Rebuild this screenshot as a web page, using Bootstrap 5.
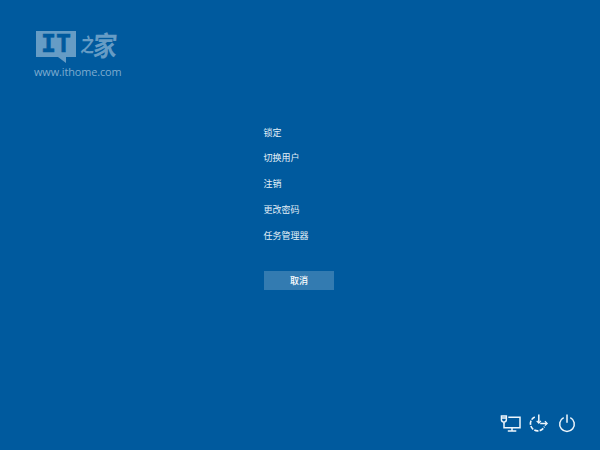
<!DOCTYPE html>
<html lang="zh-CN">
<head>
<meta charset="utf-8">
<meta name="viewport" content="width=device-width, initial-scale=1">
<title>安全选项</title>
<link href="https://cdn.jsdelivr.net/npm/bootstrap@5.3.0/dist/css/bootstrap.min.css" rel="stylesheet">
<style>
body{background:#005a9e;font-family:"Noto Sans","Noto Sans CJK SC",sans-serif;width:600px;height:450px}
.brand{padding:31px 0 0 34px;height:123.5px;color:#669cc5;line-height:1}
.brand-line{height:32px;padding-left:2px}
.bubble{width:40px;height:32px;background:#669cc5;clip-path:polygon(0 0,100% 0,100% 26px,30px 26px,30px 32px,22px 26px,0 26px);color:#005a9e}
.bubble span{display:block;font:bold 25px/26px "DejaVu Sans Mono",monospace;text-align:center;-webkit-text-stroke:.5px #005a9e}
.script-name{font-family:"Noto Sans CJK SC",sans-serif;font-weight:700;margin-left:4px;transform:skewX(-5deg)}
.script-name .zhi{font-size:15px;line-height:28px;width:13px;transform:scale(.9,1.3)}
.script-name .jia{font-size:24px;line-height:27px;font-weight:700;transform:scaleY(1.15)}
.site{font:10.9px/14px "Open Sans",sans-serif;margin-top:2px;letter-spacing:-.1px;color:#7eacd0}
.options{margin-left:264px;width:70px}
.option{font:9px/14px "Noto Sans CJK SC",sans-serif;color:#e4f0f8;height:25.75px;padding:2px 0 0;margin-left:-.6px;text-align:left;white-space:nowrap;border:0;background:none;display:flex;align-items:flex-start}
.cancel{--bs-btn-padding-y:0;--bs-btn-padding-x:0;height:19px;margin-top:18.5px;background:#337bb1;color:#fff;border:0;font:500 9px/20px "Noto Sans CJK SC",sans-serif}
.tools{padding:0 22px 16px 0;gap:7px}
.tools svg{display:block;overflow:visible;fill:none;stroke:#eef6fc;stroke-width:1.5}
</style>
</head>
<body class="d-flex flex-column overflow-hidden m-0">
<header class="brand">
  <div class="brand-line d-flex"><div class="bubble"><span>IT</span></div><div class="script-name d-flex"><span class="zhi">之</span><span class="jia">家</span></div></div>
  <div class="site">www.ithome.com</div>
</header>
<main class="options d-flex flex-column">
  <button class="option">锁定</button>
  <button class="option">切换用户</button>
  <button class="option">注销</button>
  <button class="option">更改密码</button>
  <button class="option">任务管理器</button>
  <button class="btn rounded-0 cancel">取消</button>
</main>
<footer class="tools d-flex justify-content-end mt-auto">
  <svg width="22" height="22" viewBox="0 0 22 22" aria-label="网络"><path d="M10.3 5.2H22V15.8H6V10.5M14 15.8v3M9.8 19h8.5"/><path d="M3.4 4h5v3.6a2.5 2.5 0 0 1-5 0zM3.8 6h4.5M6 9.5v2" stroke-width="1.4"/></svg>
  <svg width="22" height="22" viewBox="0 0 22 22" aria-label="轻松使用"><path d="M7.8 4.9A7.3 7.3 0 1 0 17.4 14.6" stroke-dasharray="4.2 1.2" stroke-width="1.6"/><path d="M11.8 2.6v8.2M13.2 11.4h6.3"/><path d="M9.7 8.9l2.1 2.2 2.1-2.2M17.9 9.2l2.2 2.2-2.2 2.2" stroke-width="1.3"/></svg>
  <svg width="22" height="22" viewBox="0 0 22 22" aria-label="电源"><path d="M7.7 5.7a7.3 7.3 0 1 0 6.6 0M11 2.5v8.3"/></svg>
</footer>
<script src="https://cdn.jsdelivr.net/npm/bootstrap@5.3.0/dist/js/bootstrap.bundle.min.js"></script>
</body>
</html>
